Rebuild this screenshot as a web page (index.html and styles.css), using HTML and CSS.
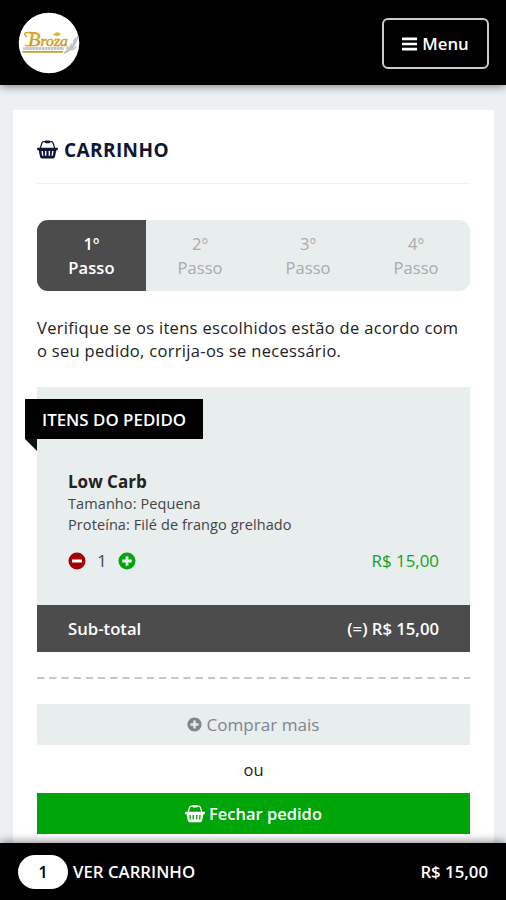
FILE: index.html
```html
<!DOCTYPE html>
<html lang="pt-BR">
<head>
<meta charset="utf-8">
<meta name="viewport" content="width=device-width">
<title>Carrinho</title>
<link rel="stylesheet" href="styles.css">
</head>
<body>
<svg class="defs" width="0" height="0">
  <symbol id="basket" viewBox="0 0 22 20">
    <path d="M3.5 8.5 5 3.4Q5.5 1.8 7.2 1.8H14.8Q16.5 1.8 17 3.4L18.5 8.5" fill="none" stroke="currentColor" stroke-width="1.3"/>
    <rect x="8.3" y=".6" width="5.4" height="2.8" rx="1" fill="currentColor"/>
    <path fill="currentColor" fill-rule="evenodd" d="M1 8.2H21Q22 8.2 22 9.4T21 10.7H20.3L18.8 18Q18.5 19.5 16.8 19.5H5.2Q3.5 19.5 3.2 18L1.7 10.7H1Q0 10.7 0 9.4T1 8.2ZM4.7 11.7 5.3 16.7H6.7L6.2 11.7ZM8.3 11.7V16.7H9.8V11.7ZM12.2 11.7V16.7H13.7V11.7ZM15.8 11.7 15.3 16.7H16.7L17.3 11.7Z"/>
  </symbol>
  <symbol id="plus" viewBox="0 0 18 18">
    <path fill="currentColor" fill-rule="evenodd" d="M9 .5A8.5 8.5 0 1 1 9 17.5 8.5 8.5 0 0 1 9 .5ZM7.6 4.2V7.6H4.2V10.4H7.6V13.8H10.4V10.4H13.8V7.6H10.4V4.2Z"/>
  </symbol>
</svg>
<header class="topbar">
  <svg class="logo" viewBox="0 0 62 62">
    <defs><linearGradient id="gold" x1="0" y1="0" x2="0" y2="1"><stop offset="0" stop-color="#e9b92c"/><stop offset="1" stop-color="#c58a08"/></linearGradient></defs>
    <circle cx="31" cy="31" r="30.3" fill="#fff"/>
    <path d="M9 25Q4 21 10 20.6 15 20.2 20 21.5" fill="none" stroke="#d9a322" stroke-width="1.5"/>
    <path d="M11 33.5Q9 34.5 7 33" fill="none" stroke="#d9a322" stroke-width="1.2"/>
    <text x="10" y="33.7" textLength="40" lengthAdjust="spacingAndGlyphs" class="logo-name" fill="url(#gold)"><tspan class="logo-cap">B</tspan>roza</text>
    <path d="M35 22.5Q39 18.5 43 22Q40 26 35 22.5Z" fill="#e7b52a"/>
    <path d="M5 36.4H46" stroke="#c4c4c4" stroke-width="3" stroke-dasharray="2.6 .5"/>
    <path d="M4.5 39.8H45" stroke="#c1a32a" stroke-width="1.7"/>
    <path d="M46 41Q56 38 60 24" fill="none" stroke="#b5b5b5" stroke-width="1.5"/>
    <path d="M48 39Q48 36 50 34Q52 35 50 39ZM51 37Q51 33 54 31Q56 33 53 37ZM55 33Q54 28 58 25Q60 28 57 33ZM52 39Q55 35 59 34Q58 38 52 39Z" fill="#c4c4c4"/>
  </svg>
  <button class="menu"><svg class="bars" viewBox="0 0 16 14"><path d="M0 1.5H16M0 7H16M0 12.5H16" stroke="#fff" stroke-width="2.8"/></svg><span>Menu</span></button>
</header>
<main class="page">
  <section class="panel">
    <h1 class="title"><svg class="basket"><use href="#basket"/></svg><span>CARRINHO</span></h1>
    <ol class="steps">
      <li class="step active">1º<br>Passo</li>
      <li class="step">2º<br>Passo</li>
      <li class="step">3º<br>Passo</li>
      <li class="step">4º<br>Passo</li>
    </ol>
    <p class="intro">Verifique se os itens escolhidos estão de acordo com<br>o seu pedido, corrija-os se necessário.</p>
    <section class="order">
      <h2 class="ribbon"><span>ITENS DO PEDIDO</span></h2>
      <div class="item">
        <h3 class="name">Low Carb</h3>
        <p class="detail">Tamanho: Pequena</p>
        <p class="detail protein">Proteína: Filé de frango grelhado</p>
        <div class="quantity-row">
          <div class="quantity">
            <svg class="round-icon minus" viewBox="0 0 18 18"><circle cx="9" cy="9" r="8.5" fill="currentColor"/><path d="M4 9H14" stroke="#fff" stroke-width="3"/></svg>
            <span class="count">1</span>
            <svg class="round-icon add"><use href="#plus"/></svg>
          </div>
          <span class="price">R$ 15,00</span>
        </div>
      </div>
      <div class="subtotal"><span class="subtotal-label">Sub-total</span><span class="subtotal-value">(=) R$ 15,00</span></div>
    </section>
    <svg class="divider"><path d="M0 1H433" stroke="#c6c6c6" stroke-width="2" stroke-dasharray="7.3 4.9"/></svg>
    <button class="action more"><svg class="more-icon"><use href="#plus"/></svg><span class="more-label">Comprar mais</span></button>
    <p class="or">ou</p>
    <button class="action checkout"><svg class="basket"><use href="#basket"/></svg><span class="checkout-label">Fechar pedido</span></button>
  </section>
</main>
<footer class="cartbar">
  <span class="badge">1</span><span class="view">VER CARRINHO</span><span class="total">R$ 15,00</span>
</footer>
</body>
</html>
```
FILE: styles.css
```css
* { box-sizing: border-box; }
body {
  margin: 0; height: 900px; overflow: hidden;
  display: flex; flex-direction: column;
  background: #ecf0f3; color: #222;
  font: 16.5px/23px "Open Sans", sans-serif;
}
h1, h2, h3, p, ol { margin: 0; padding: 0; font-weight: 400; }
button { font: inherit; padding: 0; border: 0; }
svg { display: block; flex: none; }
.defs { position: absolute; }
.topbar {
  flex: none; height: 85px; padding: 0 17px 0 18px; z-index: 1;
  display: flex; align-items: center; justify-content: space-between;
  background: #000; box-shadow: 0 1px 9px rgba(0,0,0,.5);
}
.logo { width: 62px; height: 62px; }
.logo-name { font: italic 400 14px "Liberation Serif", serif; stroke: #d29a16; stroke-width: .4px; }
.logo-cap { font-size: 18px; }
.menu {
  width: 107px; height: 51px; margin-top: 2px;
  display: flex; align-items: center; justify-content: center; gap: 5px;
  border: 2px solid #ccc; border-radius: 6px;
  background: #000; color: #fff; font-weight: 600; font-size: 16.8px;
}
.bars { width: 15px; height: 14px; }
.page { flex: 1; min-height: 0; padding: 25px 12px 0 13px; }
.panel { height: 100%; padding: 25px 24px 0; background: #fff; }
.title {
  height: 49px; padding-bottom: 18px;
  display: flex; align-items: center; gap: 6px;
  border-bottom: 1px solid #efefef;
  color: #0e1536; font-size: 19px; font-weight: 700; letter-spacing: .4px;
}
.title .basket { margin-top: -1px; }
.basket { width: 21px; height: 19px; }
.steps {
  list-style: none; height: 71px; margin-top: 36px;
  display: grid; grid-template-columns: 109px repeat(3, 1fr);
  border-radius: 11px; overflow: hidden;
  background: #e8edee; color: #a9abac; text-align: center;
}
.step { padding-top: 12px; line-height: 24px; letter-spacing: .1px; }
.step.active { background: #4c4c4c; color: #fff; font-weight: 600; }
.intro { margin-top: 25px; white-space: nowrap; letter-spacing: .31px; }
.order { height: 265px; margin-top: 25px; padding-top: 12px; background: #e8edee; }
.ribbon {
  position: relative; width: 178px; height: 40px; margin-left: -12px; padding-left: 17px;
  background: #000; color: #fff; font-size: 16.9px; line-height: 41px; font-weight: 600; white-space: nowrap;
}
.ribbon::after {
  content: ""; position: absolute; left: 0; top: 100%;
  border-top: 12px solid #111; border-left: 12px solid transparent;
}
.item { height: 166px; padding: 32px 31px 0; }
.name { font-size: 17px; font-weight: 700; line-height: 22px; }
.detail { font-size: 14.5px; line-height: 21px; letter-spacing: .09px; color: #444; }
.quantity-row { margin-top: 14px; display: flex; align-items: center; justify-content: space-between; }
.quantity { display: flex; align-items: center; }
.round-icon { width: 18px; height: 18px; }
.minus { color: #a30008; }
.add { color: #02a50b; }
.count { width: 32px; text-align: center; color: #444; }
.price { color: #12a41b; font-size: 16.9px; }
.subtotal {
  height: 47px; padding: 0 31px;
  display: flex; align-items: center; justify-content: space-between;
  background: #4c4c4c; color: #fff; font-weight: 600; font-size: 16.7px;
}
.divider { width: 100%; height: 2px; margin-top: 25px; }
.action { width: 100%; height: 41px; display: flex; align-items: center; justify-content: center; gap: 4px; }
.more { margin-top: 25px; background: #e8edee; color: #7f858a; font-size: 17.1px; }
.more-icon { width: 15px; height: 15px; }
.or { height: 48px; line-height: 49px; text-align: center; }
.checkout { background: #00a509; color: #fff; font-weight: 600; gap: 4px; }
.checkout .basket { width: 20px; }
.cartbar {
  flex: none; height: 57px; padding: 0 18px 0 18px; z-index: 1;
  display: flex; align-items: center;
  background: #000; color: #fff; font-weight: 600; font-size: 16.8px; box-shadow: 0 -1px 9px rgba(0,0,0,.5);
}
.badge { width: 50px; height: 34px; line-height: 34px; margin-right: 5px; border-radius: 17px; background: #fff; color: #000; text-align: center; }
.total { margin-left: auto; }
```
